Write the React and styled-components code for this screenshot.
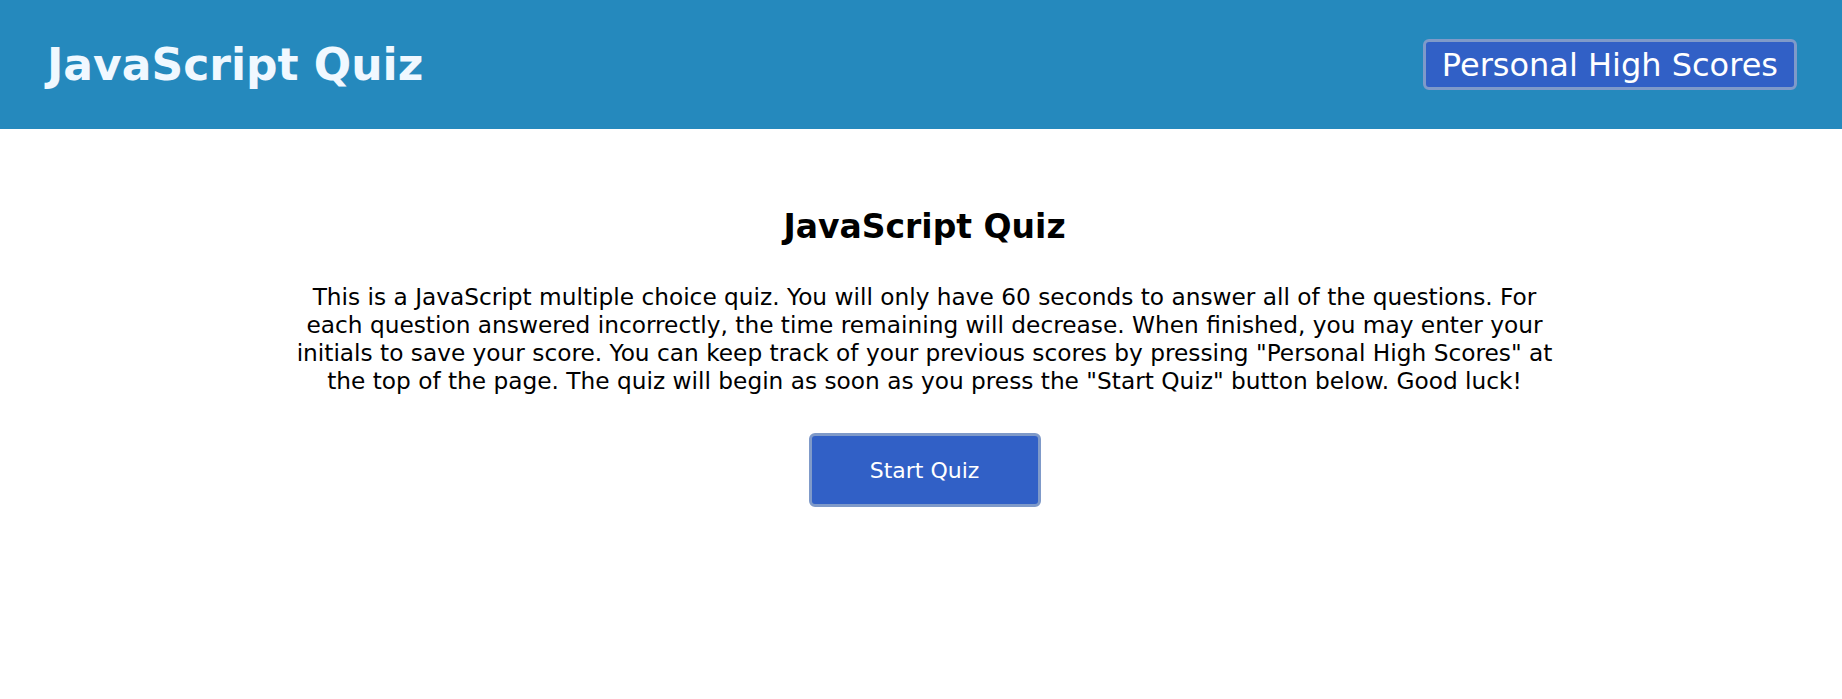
import React from "react";
import styled, { createGlobalStyle } from "styled-components";

const GlobalStyle = createGlobalStyle`
  body {
    margin: 0;
    background-color: #ffffff;
    font-family: "DejaVu Sans", "Liberation Sans", sans-serif;
  }
`

const Header = styled.header`
  background-color: #2589bd;
  height: 129px;
  display: flex;
  align-items: center;
  justify-content: space-between;
  padding: 0 45px 0 47px;
  box-sizing: border-box;
`

const Title = styled.h1`
  margin: 0;
  font-size: 44px;
  font-weight: bold;
  color: #f0f8ff;
`

const NavButton = styled.button`
  font-family: inherit;
  font-size: 32px;
  color: #ffffff;
  background-color: #3160c6;
  border: 3px solid #7f9ac9;
  border-radius: 6px;
  height: 51px;
  padding: 0 16px;
  cursor: pointer;
`

const Main = styled.main`
  width: 1276px;
  margin: 0 auto;
  padding: 78px 0 0 7px;
  text-align: center;
`

const Heading = styled.h2`
  margin: 0;
  font-size: 33px;
  line-height: 40px;
  font-weight: bold;
  color: #000000;
`

const Intro = styled.p`
  margin: 36px 0 38px;
  font-size: 23.25px;
  line-height: 28px;
  color: #000000;
`

const StartButton = styled.button`
  font-family: inherit;
  font-size: 22px;
  color: #ffffff;
  background-color: #3160c6;
  border: 3px solid #7f9ac9;
  border-radius: 6px;
  width: 232px;
  height: 74px;
  cursor: pointer;
`

const App = () => {
  return (
    <>
      <GlobalStyle />
      <Header>
        <Title>JavaScript Quiz</Title>
        <NavButton>Personal High Scores</NavButton>
      </Header>
      <Main>
        <Heading>JavaScript Quiz</Heading>
        <Intro>
          This is a JavaScript multiple choice quiz. You will only have 60 seconds to answer all of the questions. For each question answered incorrectly, the time remaining will decrease. When finished, you may enter your initials to save your score. You can keep track of your previous scores by pressing "Personal High Scores" at the top of the page. The quiz will begin as soon as you press the "Start Quiz" button below. Good luck!
        </Intro>
        <StartButton>Start Quiz</StartButton>
      </Main>
    </>
  )
}

export default App
